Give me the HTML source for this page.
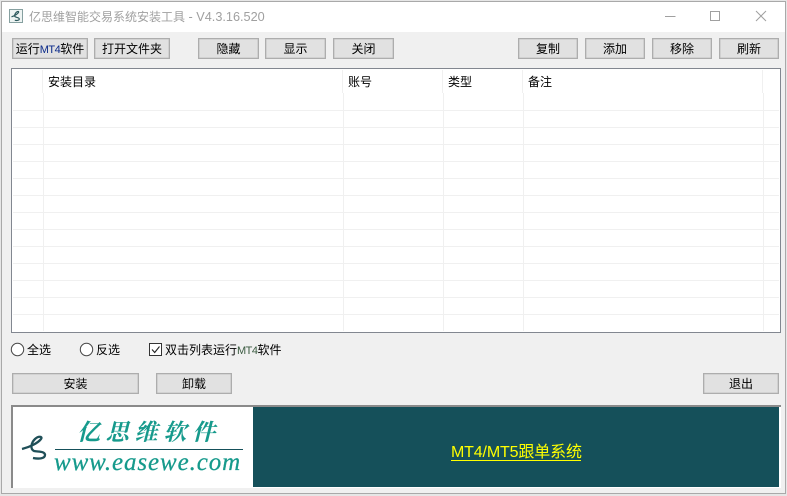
<!DOCTYPE html>
<html>
<head>
<meta charset="utf-8">
<style>
html,body{margin:0;padding:0;width:787px;height:496px;overflow:hidden;background:#e6e6e6;}
body{position:relative;font-family:"Liberation Sans","WenQuanYi Zen Hei","Noto Sans CJK SC",sans-serif;font-size:12px;color:#000;}
div,a,span{position:absolute;box-sizing:border-box;}
span.i{position:static;}
.win{left:1px;top:1px;width:785px;height:493px;background:#f0f0f0;border:1px solid #a9a9a9;}
.tb{left:2px;top:2px;width:783px;height:30px;background:#fff;}
.title{left:29px;top:9px;font-size:12px;color:#a0a0a0;white-space:nowrap;line-height:16px;}
.b{background:#e1e1e1;border:1px solid #adadad;height:21px;text-align:center;line-height:21px;white-space:nowrap;font-size:12px;box-shadow:inset 0 0 0 .4px #b8b8b8;}
.m{font-size:11px;letter-spacing:-.5px;color:#0a2a8a;}
.l{background:#f0f0f0;}
.h{font-size:12px;line-height:16px;top:74px;white-space:nowrap;}
.t{font-size:12px;line-height:16px;white-space:nowrap;}
</style>
</head>
<body>
<div class="win"></div>
<div class="tb"></div>
<svg style="position:absolute;left:8px;top:8px" width="16" height="16" viewBox="0 0 16 16">
<rect x="1.5" y="1.5" width="13" height="13" fill="#eef4f3" stroke="#86a0a0" stroke-width="1"/>
<path d="M3.5 8.8 C6 8 9 6.5 10.5 4.5 C11.2 3.2 9.5 3.2 8.3 4.3 C6.8 5.8 6 7.8 7.2 8.8 C8.5 9.6 11.3 9.4 11.3 11 C11.3 12.4 8.8 12.8 6.8 12.2" fill="none" stroke="#2e5a5e" stroke-width="1.2"/>
</svg>
<div class="title">亿思维智能交易系统安装工具<span class="i" style="font-size:12.7px"> - V4.3.16.520</span></div>
<svg style="position:absolute;left:660px;top:8px" width="110" height="16" viewBox="0 0 110 16">
<path d="M5 8.5H15.5" stroke="#a0a0a0" stroke-width="1" fill="none"/>
<rect x="50.5" y="3.5" width="9" height="9" fill="none" stroke="#a0a0a0" stroke-width="1"/>
<path d="M96 3L106 13M106 3L96 13" stroke="#a0a0a0" stroke-width="1" fill="none"/>
</svg>

<div class="b" style="left:12px;top:38px;width:76px;">运行<span class="i m">MT4</span>软件</div>
<div class="b" style="left:94px;top:38px;width:76px;">打开文件夹</div>
<div class="b" style="left:198px;top:38px;width:61px;">隐藏</div>
<div class="b" style="left:265px;top:38px;width:61px;">显示</div>
<div class="b" style="left:333px;top:38px;width:61px;">关闭</div>
<div class="b" style="left:518px;top:38px;width:60px;">复制</div>
<div class="b" style="left:585px;top:38px;width:60px;">添加</div>
<div class="b" style="left:652px;top:38px;width:60px;">移除</div>
<div class="b" style="left:719px;top:38px;width:60px;">刷新</div>

<div style="left:11px;top:68px;width:770px;height:265px;background:#fff;border:1.5px solid #828790;"></div>
<div class="l" style="left:42px;top:70px;width:1px;height:23px;"></div>
<div class="l" style="left:342px;top:70px;width:1px;height:23px;"></div>
<div class="l" style="left:442px;top:70px;width:1px;height:23px;"></div>
<div class="l" style="left:522px;top:70px;width:1px;height:23px;"></div>
<div class="l" style="left:762px;top:70px;width:1px;height:23px;"></div>
<div class="l" style="left:43px;top:93px;width:1px;height:238px;"></div>
<div class="l" style="left:343px;top:93px;width:1px;height:238px;"></div>
<div class="l" style="left:443px;top:93px;width:1px;height:238px;"></div>
<div class="l" style="left:523px;top:93px;width:1px;height:238px;"></div>
<div class="l" style="left:763px;top:93px;width:1px;height:238px;"></div>
<div class="l" style="left:13px;top:110px;width:766px;height:1px;"></div>
<div class="l" style="left:13px;top:127px;width:766px;height:1px;"></div>
<div class="l" style="left:13px;top:144px;width:766px;height:1px;"></div>
<div class="l" style="left:13px;top:161px;width:766px;height:1px;"></div>
<div class="l" style="left:13px;top:178px;width:766px;height:1px;"></div>
<div class="l" style="left:13px;top:195px;width:766px;height:1px;"></div>
<div class="l" style="left:13px;top:212px;width:766px;height:1px;"></div>
<div class="l" style="left:13px;top:229px;width:766px;height:1px;"></div>
<div class="l" style="left:13px;top:246px;width:766px;height:1px;"></div>
<div class="l" style="left:13px;top:263px;width:766px;height:1px;"></div>
<div class="l" style="left:13px;top:280px;width:766px;height:1px;"></div>
<div class="l" style="left:13px;top:297px;width:766px;height:1px;"></div>
<div class="l" style="left:13px;top:314px;width:766px;height:1px;"></div>
<div class="h" style="left:48px;">安装目录</div>
<div class="h" style="left:348px;">账号</div>
<div class="h" style="left:448px;">类型</div>
<div class="h" style="left:528px;">备注</div>

<svg style="position:absolute;left:10px;top:342px" width="160" height="16" viewBox="0 0 160 16">
<circle cx="7.5" cy="7.5" r="6.2" fill="#fff" stroke="#444" stroke-width="1"/>
<circle cx="76.5" cy="7.5" r="6.2" fill="#fff" stroke="#444" stroke-width="1"/>
<rect x="139.5" y="1.5" width="12" height="12" fill="#fff" stroke="#333" stroke-width="1"/>
<path d="M142 7.5L144.7 10.5L149.5 4.5" fill="none" stroke="#222" stroke-width="1.1"/>
</svg>
<div class="t" style="left:27px;top:342px;">全选</div>
<div class="t" style="left:96px;top:342px;">反选</div>
<div class="t" style="left:165px;top:342px;">双击列表运行<span class="i m" style="color:#3a5a40">MT4</span>软件</div>

<div class="b" style="left:12px;top:373px;width:127px;">安装</div>
<div class="b" style="left:156px;top:373px;width:76px;">卸载</div>
<div class="b" style="left:703px;top:373px;width:76px;">退出</div>

<div style="left:11px;top:405px;width:770px;height:83px;background:#fff;border-top:2px solid #8a8a8a;border-left:2px solid #8a8a8a;"></div>
<div style="left:253px;top:407px;width:526px;height:80px;background:#15505a;"></div>
<div style="left:55px;top:449px;width:188px;height:1px;background:#15505a;"></div>
<svg style="position:absolute;left:15px;top:425px" width="40" height="40" viewBox="15 425 40 40">
<path d="M22 449 C30 447 38 443 41 439 C43 436 38 436 35 439 C31 443 30 449 34 451 C38 452 45 451 45 455 C45 459 38 459 33 458" fill="none" stroke="#1f4f58" stroke-width="2.3"/>
</svg>
<div style="left:77px;top:416px;font-family:'Noto Serif CJK SC',serif;font-weight:700;font-size:23px;line-height:30px;letter-spacing:5.8px;color:#169a8c;white-space:nowrap;font-style:italic;">亿思维软件</div>
<div style="left:54px;top:450px;font-family:'Liberation Serif',serif;font-style:italic;font-size:25px;line-height:26px;letter-spacing:.9px;color:#169a8c;white-space:nowrap;-webkit-text-stroke:.25px #169a8c;">www.easewe.com</div>
<a style="left:451px;top:443px;font-size:16px;line-height:20px;letter-spacing:-.15px;color:#ffff00;white-space:nowrap;">MT4/MT5跟单系统</a>
<div style="left:451px;top:460px;width:130px;height:1px;background:#ffff00;"></div>
</body>
</html>
